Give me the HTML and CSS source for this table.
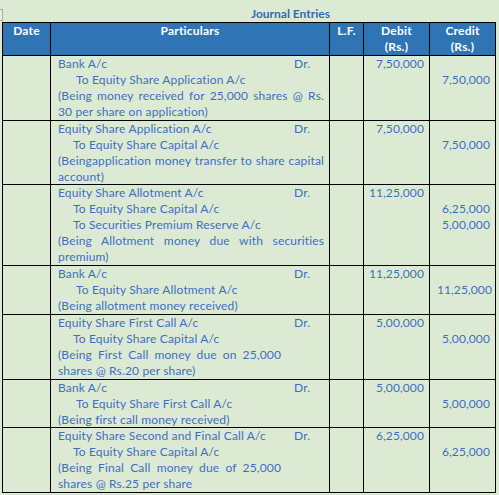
FILE: index.html
```html
<!DOCTYPE html>
<html>
<head>
<meta charset="utf-8">
<link rel="stylesheet" href="styles.css">
</head>
<body>
<div class="sheet">
  <div class="corner"></div>
  <div class="title">Journal Entries</div>
  <table class="journal">
    <colgroup>
      <col class="c-date"><col class="c-part"><col class="c-lf"><col class="c-debit"><col class="c-credit">
    </colgroup>
    <thead>
      <tr>
        <th>Date</th>
        <th>Particulars</th>
        <th>L.F.</th>
        <th>Debit<br>(Rs.)</th>
        <th>Credit<br>(Rs.)</th>
      </tr>
    </thead>
    <tbody>
      <tr>
        <td></td>
        <td class="part">
          <div class="dr"><span>Bank A/c</span><span>Dr.</span></div>
          <div class="to wide">To Equity Share Application A/c</div>
          <div class="just full">(Being money received for 25,000 shares @ Rs.</div>
          <div>30 per share on application)</div>
        </td>
        <td></td>
        <td class="amt"><div>7,50,000</div></td>
        <td class="amt"><div>&nbsp;</div><div>7,50,000</div></td>
      </tr>
      <tr class="tight">
        <td></td>
        <td class="part">
          <div class="dr"><span>Equity Share Application A/c</span><span>Dr.</span></div>
          <div class="to">To Equity Share Capital A/c</div>
          <div class="just full">(Beingapplication money transfer to share capital</div>
          <div>account)</div>
        </td>
        <td></td>
        <td class="amt"><div>7,50,000</div></td>
        <td class="amt"><div>&nbsp;</div><div>7,50,000</div></td>
      </tr>
      <tr>
        <td></td>
        <td class="part">
          <div class="dr"><span>Equity Share Allotment A/c</span><span>Dr.</span></div>
          <div class="to">To Equity Share Capital A/c</div>
          <div class="to">To Securities Premium Reserve A/c</div>
          <div class="just full">(Being Allotment money due with securities</div>
          <div>premium)</div>
        </td>
        <td></td>
        <td class="amt"><div>11,25,000</div></td>
        <td class="amt"><div>&nbsp;</div><div>6,25,000</div><div>5,00,000</div></td>
      </tr>
      <tr>
        <td></td>
        <td class="part">
          <div class="dr"><span>Bank A/c</span><span>Dr.</span></div>
          <div class="to wide">To Equity Share Allotment A/c</div>
          <div>(Being allotment money received)</div>
        </td>
        <td></td>
        <td class="amt"><div>11,25,000</div></td>
        <td class="amt"><div>&nbsp;</div><div class="over">11,25,000</div></td>
      </tr>
      <tr>
        <td></td>
        <td class="part">
          <div class="dr"><span>Equity Share First Call A/c</span><span>Dr.</span></div>
          <div class="to">To Equity Share Capital A/c</div>
          <div class="just short">(Being First Call money due on 25,000</div>
          <div>shares @ Rs.20 per share)</div>
        </td>
        <td></td>
        <td class="amt"><div>5,00,000</div></td>
        <td class="amt"><div>&nbsp;</div><div>5,00,000</div></td>
      </tr>
      <tr class="tight">
        <td></td>
        <td class="part">
          <div class="dr"><span>Bank A/c</span><span>Dr.</span></div>
          <div class="to wide">To Equity Share First Call A/c</div>
          <div>(Being first call money received)</div>
        </td>
        <td></td>
        <td class="amt"><div>5,00,000</div></td>
        <td class="amt"><div>&nbsp;</div><div>5,00,000</div></td>
      </tr>
      <tr>
        <td></td>
        <td class="part">
          <div class="dr"><span>Equity Share Second and Final Call A/c</span><span>Dr.</span></div>
          <div class="to">To Equity Share Capital A/c</div>
          <div class="just short">(Being Final Call money due of 25,000</div>
          <div>shares @ Rs.25 per share</div>
        </td>
        <td></td>
        <td class="amt"><div>6,25,000</div></td>
        <td class="amt"><div>&nbsp;</div><div>6,25,000</div></td>
      </tr>
    </tbody>
  </table>
</div>
</body>
</html>
```

FILE: styles.css
```css
html, body {
  margin: 0;
  padding: 0;
  background: #dcead3;
}

body {
  font-family: Lato, "Open Sans", sans-serif;
  font-size: 12px;
  letter-spacing: 0.15px;
  color: #3c6fc2;
}

.sheet {
  position: relative;
  padding: 6px 0 0 2px;
}

.corner {
  position: absolute;
  left: -6px;
  top: 9px;
  width: 7px;
  height: 10px;
  border: 1px solid #a9a9a9;
  background: #e6efe0;
}

.title {
  padding-left: 249px;
  line-height: 16px;
  font-weight: bold;
  font-size: 12px;
  letter-spacing: 0;
  color: #2e6db4;
}

.journal {
  border-collapse: collapse;
  table-layout: fixed;
  width: 493px;
}

.c-date { width: 48px; }
.c-part { width: 279px; }
.c-lf { width: 34px; }
.c-debit { width: 66px; }
.c-credit { width: 66px; }

.journal th,
.journal td {
  border: 1px solid #000;
  padding: 0;
  vertical-align: top;
  line-height: 16px;
  white-space: nowrap;
}

.journal th {
  background: #2f75b5;
  color: #fff;
  font-weight: bold;
  font-size: 12px;
  letter-spacing: 0.2px;
  text-align: center;
  height: 32px;
}

.part {
  padding-left: 7px !important;
}

.dr {
  display: grid;
  grid-template-columns: 236px auto;
}

.to {
  padding-left: 15px;
}

.to.wide {
  padding-left: 18px;
}

.just {
  text-align: justify;
  text-align-last: justify;
}

.just.full {
  width: 266px;
}

.just.short {
  width: 223px;
}

.amt {
  text-align: right;
  letter-spacing: 0.1px;
  padding-right: 5px !important;
}

.amt .over {
  margin-right: -2px;
}

.tight .part > :last-child {
  margin-bottom: -1px;
}
```
